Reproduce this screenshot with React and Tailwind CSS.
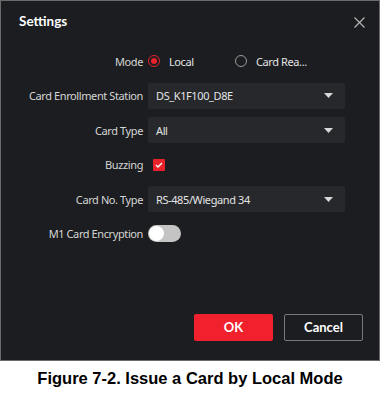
import React from "react";

function Caret() {
  return (
    <svg width="9" height="5" viewBox="0 0 9 5" className="shrink-0">
      <path d="M0 0 H9 L4.5 5 Z" fill="#d8d8d8" />
    </svg>
  );
}

function Select({ value }) {
  return (
    <div className="w-[197px] h-[26px] bg-[#26282c] rounded-[2px] flex items-center justify-between pl-[8px] pr-[12px]">
      <span className="text-[#e4e4e4]">{value}</span>
      <Caret />
    </div>
  );
}

function Row({ label, children }) {
  return (
    <div className="flex items-center h-[26px]">
      <div className="w-[142px] text-right text-[#d6d6d6] whitespace-nowrap">{label}</div>
      <div className="pl-[5px] flex items-center">{children}</div>
    </div>
  );
}

export default function App() {
  return (
    <div className="w-[380px] h-[395px] bg-white" style={{ fontFamily: '"Noto Sans", "Open Sans", sans-serif' }}>
      <div className="w-[380px] h-[361px] bg-[#1b1d20] border border-[#6b6b6b] flex flex-col text-[11px] tracking-[-0.4px] leading-none">
        <div className="flex items-center justify-between pl-[18px] pr-[14px] pt-[12px] h-[30px]">
          <span className="text-white font-bold text-[13.5px] tracking-normal" style={{ fontFamily: 'Lato, sans-serif' }}>Settings</span>
          <svg width="11" height="11" viewBox="0 0 11 11">
            <path d="M0.5 0.5 L10.5 10.5 M10.5 0.5 L0.5 10.5" stroke="#b4b4b4" strokeWidth="1.2" />
          </svg>
        </div>
        <div className="flex flex-col gap-[8.5px] mt-[17px]">
          <Row label="Mode">
            <div className="flex items-center">
              <span className="w-[12px] h-[12px] rounded-full border border-[#e8212b] flex items-center justify-center">
                <span className="w-[6px] h-[6px] rounded-full bg-[#e8212b]" />
              </span>
              <span className="ml-[9px] text-[#e4e4e4] w-[66px]">Local</span>
              <span className="w-[12px] h-[12px] rounded-full border border-[#9a9a9a]" />
              <span className="ml-[9px] text-[#e4e4e4]">Card Rea...</span>
            </div>
          </Row>
          <Row label="Card Enrollment Station">
            <Select value="DS_K1F100_D8E" />
          </Row>
          <Row label="Card Type">
            <Select value="All" />
          </Row>
          <Row label="Buzzing">
            <span className="ml-[5px] w-[12px] h-[12px] bg-[#e8212b] rounded-[1px] flex items-center justify-center">
              <svg width="8" height="6" viewBox="0 0 8 6">
                <path d="M1 3 L3 5 L7 1" stroke="white" strokeWidth="1.4" fill="none" />
              </svg>
            </span>
          </Row>
          <Row label="Card No. Type">
            <Select value="RS-485/Wiegand 34" />
          </Row>
          <Row label="M1 Card Encryption">
            <span className="w-[33px] h-[17px] rounded-full bg-[#c4c4c4] flex items-center pl-[1px]">
              <span className="w-[15px] h-[15px] rounded-full bg-white" />
            </span>
          </Row>
        </div>
        <div className="flex-1" />
        <div className="flex justify-end gap-[11px] pr-[16px] pb-[19px] tracking-normal" style={{ fontFamily: 'Lato, sans-serif' }}>
          <div className="w-[79px] h-[27px] bg-[#f0202c] rounded-[2px] flex items-center justify-center text-white font-bold text-[13px]">OK</div>
          <div className="w-[79px] h-[27px] border border-[#7a7a7a] rounded-[2px] flex items-center justify-center text-white font-bold text-[13px]">Cancel</div>
        </div>
      </div>
      <div className="h-[34px] flex items-center justify-center text-black font-bold text-[16.5px]" style={{ fontFamily: '"Liberation Sans", Arial, sans-serif' }}>
        Figure 7-2. Issue a Card by Local Mode
      </div>
    </div>
  );
}
